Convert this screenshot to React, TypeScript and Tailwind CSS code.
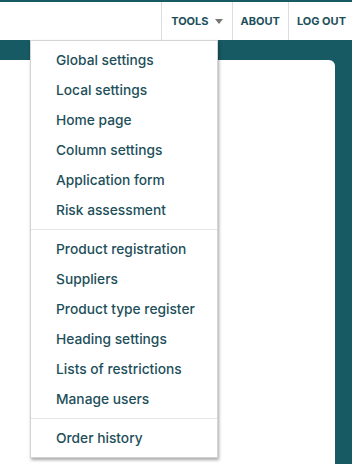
import React from "react";

const groups = [
  ["Global settings", "Local settings", "Home page", "Column settings", "Application form", "Risk assessment"],
  ["Product registration", "Suppliers", "Product type register", "Heading settings", "Lists of restrictions", "Manage users"],
  ["Order history"],
];

export default function App() {
  return (
    <div className="w-[352px] h-[464px] overflow-hidden bg-[#175a63] relative" style={{ fontFamily: "Inter, 'Liberation Sans', sans-serif" }}>
      <div className="h-[2px] bg-[#175a63]" />
      <header className="h-[38px] bg-white flex justify-end items-stretch">
        <div className="flex items-center gap-[6px] border-l border-[#dcdcdc] pl-[9px] pr-[9px] text-[11px] font-bold text-[#1d4f5a]">
          TOOLS
          <svg width="8" height="5" viewBox="0 0 8 5"><path d="M0 0h8L4 5z" fill="#777" /></svg>
        </div>
        <div className="flex items-center border-l border-[#dcdcdc] px-[8px] text-[11px] font-bold text-[#1d4f5a]">ABOUT</div>
        <div className="flex items-center border-l border-[#dcdcdc] pl-[8px] pr-[6px] text-[11px] font-bold text-[#1d4f5a]">LOG OUT</div>
      </header>
      <div className="pt-[20px] pr-[17px]">
        <div className="h-[420px] bg-white rounded-tr-[6px]" />
      </div>
      <div className="absolute left-[30px] top-[40px] w-[188px] bg-white border border-[#d4d4d4] shadow-[1px_2px_3px_rgba(0,0,0,0.35)] pb-[4px]">
        {groups.map((g, i) => (
          <div key={i} className={i > 0 ? "border-t border-[#e6e6e6] pt-[4px]" : "pt-[4px]"}>
            {g.map((t) => (
              <div key={t} className="h-[30px] flex items-center pl-[25px] text-[13.75px] font-medium text-[#1d4f5a]">
                {t}
              </div>
            ))}
            {i < groups.length - 1 && <div className="h-[4px]" />}
          </div>
        ))}
      </div>
    </div>
  );
}
